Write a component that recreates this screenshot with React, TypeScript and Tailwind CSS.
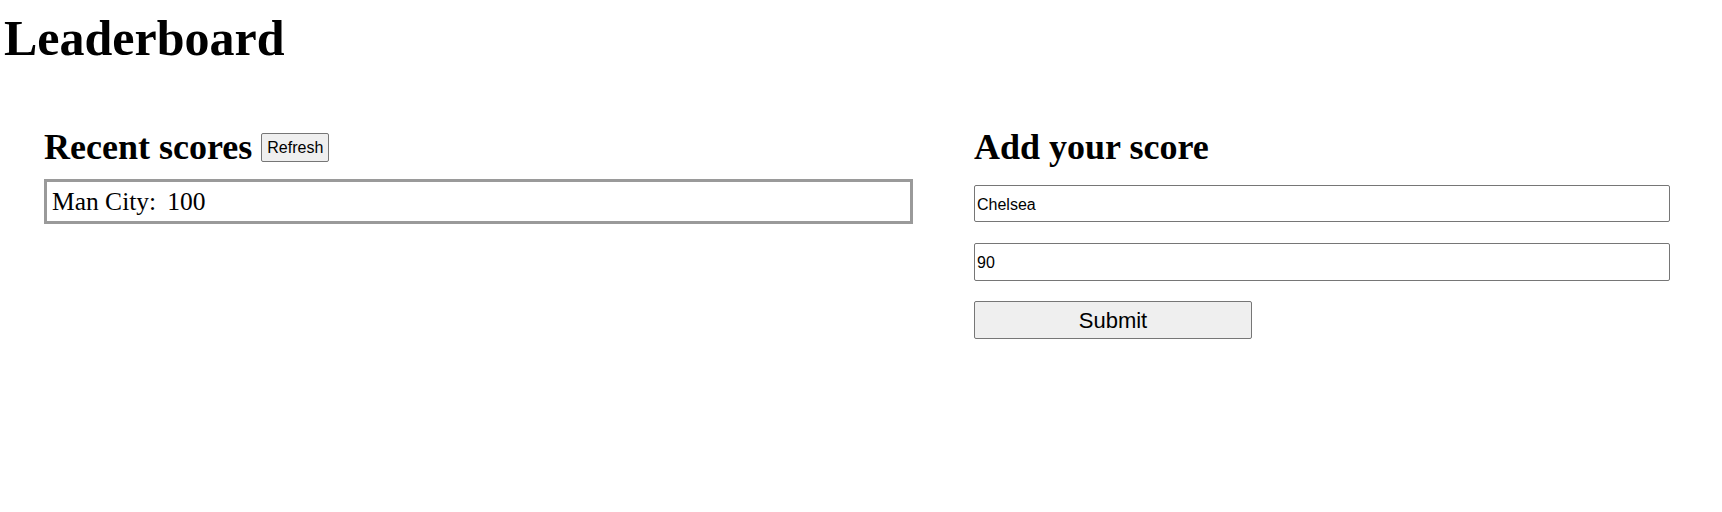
import React from 'react';

export default function App() {
  return (
    <div className="min-h-[512px] w-[1722px] bg-white text-black">
      <h1 className="pl-[4px] pt-[10px] font-['Liberation_Serif',serif] text-[50px] font-bold leading-[56px]">
        Leaderboard
      </h1>

      <div className="mt-[61px] flex">
        {/* Recent scores */}
        <div className="ml-[44px] w-[869px]">
          <div className="flex h-[41px] items-center">
            <h2 className="font-['Liberation_Serif',serif] text-[36px] font-bold leading-[41px]">Recent scores</h2>
            <button className="ml-[9px] h-[29px] rounded-[2px] border border-[#767676] bg-[#efefef] px-[5px] font-['Liberation_Sans',sans-serif] text-[16px] leading-none">
              Refresh
            </button>
          </div>
          <div className="mt-[11px] border-[3px] border-[#9a9a9a] px-[5px] py-[6px] font-['Liberation_Serif',serif] text-[25.5px] leading-[27px]">
            <span>Man City:</span>
            <span className="ml-[11px]">100</span>
          </div>
        </div>

        {/* Add your score */}
        <div className="ml-[61px] w-[696px]">
          <h2 className="font-['Liberation_Serif',serif] text-[36px] font-bold leading-[41px]">Add your score</h2>
          <input
            defaultValue="Chelsea"
            className="mt-[17px] block h-[37px] w-full rounded-[2px] border border-[#767676] px-[2px] pt-[2px] font-['Liberation_Sans',sans-serif] text-[16px] outline-none"
          />
          <input
            defaultValue="90"
            className="mt-[21px] block h-[38px] w-full rounded-[2px] border border-[#767676] px-[2px] pt-[1px] font-['Liberation_Sans',sans-serif] text-[16px] outline-none"
          />
          <button className="mt-[20px] block h-[38px] w-[278px] rounded-[2px] border border-[#767676] bg-[#efefef] pt-[2px] font-['Liberation_Sans',sans-serif] text-[22px] leading-none">
            Submit
          </button>
        </div>
      </div>
    </div>
  );
}
